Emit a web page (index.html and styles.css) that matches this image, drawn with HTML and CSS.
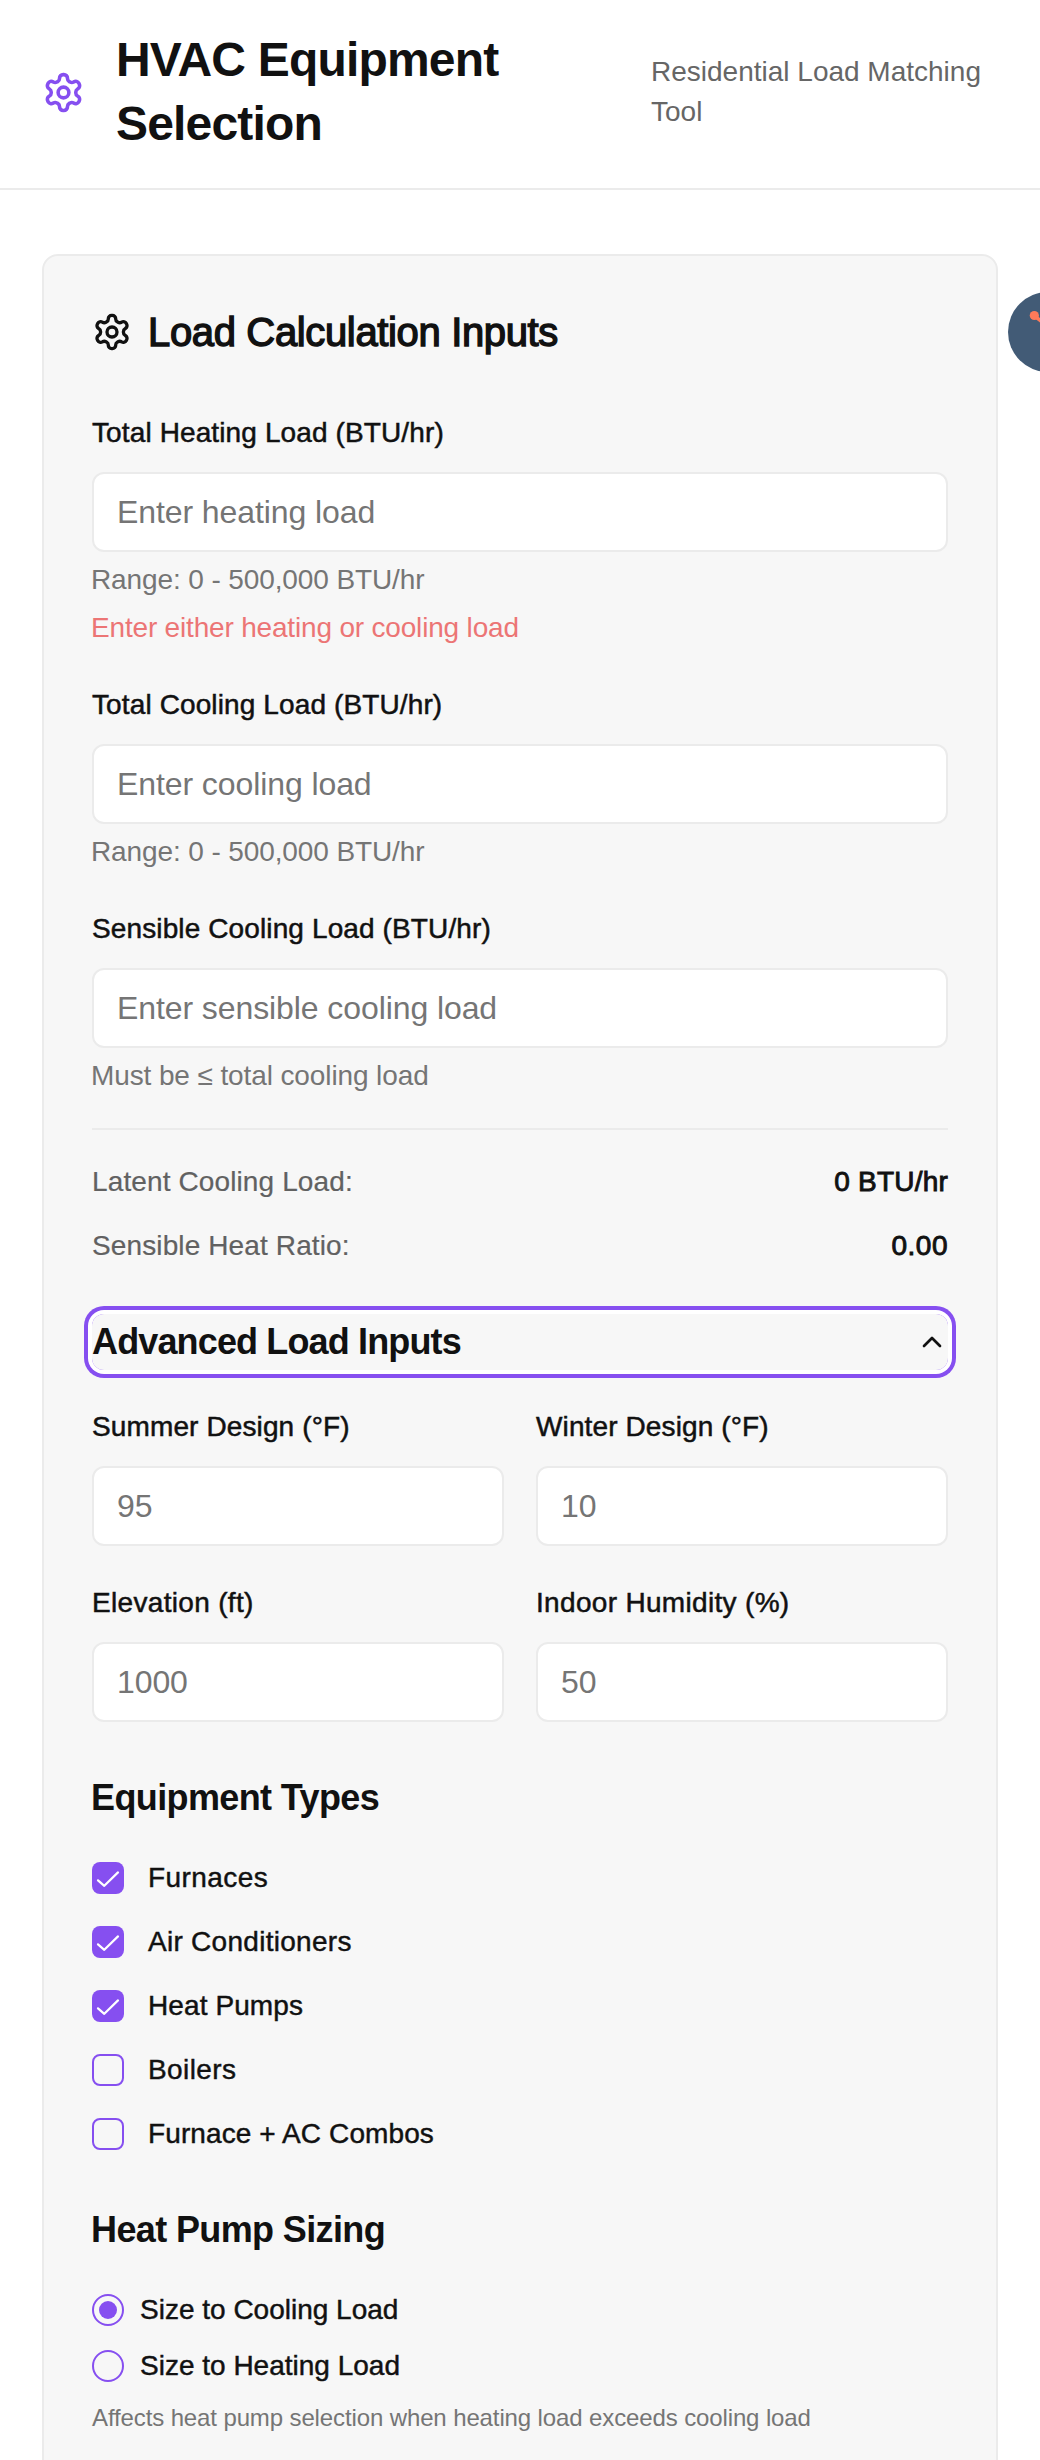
FILE: index.html
```html
<!DOCTYPE html>
<html lang="en">
<head>
<meta charset="utf-8">
<title>HVAC Equipment Selection</title>
<link rel="stylesheet" href="styles.css">
</head>
<body>
<svg class="defs" aria-hidden="true">
  <symbol id="gear" viewBox="0 0 24 24"><path d="M12.22 2h-.44a2 2 0 0 0-2 2v.18a2 2 0 0 1-1 1.73l-.43.25a2 2 0 0 1-2 0l-.15-.08a2 2 0 0 0-2.73.73l-.22.38a2 2 0 0 0 .73 2.73l.15.1a2 2 0 0 1 1 1.72v.51a2 2 0 0 1-1 1.74l-.15.09a2 2 0 0 0-.73 2.73l.22.38a2 2 0 0 0 2.73.73l.15-.08a2 2 0 0 1 2 0l.43.25a2 2 0 0 1 1 1.73V20a2 2 0 0 0 2 2h.44a2 2 0 0 0 2-2v-.18a2 2 0 0 1 1-1.73l.43-.25a2 2 0 0 1 2 0l.15.08a2 2 0 0 0 2.73-.73l.22-.39a2 2 0 0 0-.73-2.73l-.15-.08a2 2 0 0 1-1-1.74v-.5a2 2 0 0 1 1-1.74l.15-.09a2 2 0 0 0 .73-2.73l-.22-.38a2 2 0 0 0-2.73-.73l-.15.08a2 2 0 0 1-2 0l-.43-.25a2 2 0 0 1-1-1.73V4a2 2 0 0 0-2-2z"/><circle cx="12" cy="12" r="3"/></symbol>
  <symbol id="check" viewBox="0 0 32 32"><path d="M6 18.3l6.3 5.5L26 10.4"/></symbol>
</svg>
<header class="header">
  <div class="brand">
    <svg class="icon brand-icon"><use href="#gear"/></svg>
    <h1>HVAC Equipment<br>Selection</h1>
  </div>
  <p class="tagline">Residential Load Matching Tool</p>
</header>
<main class="main">
  <section class="card">
    <h2 class="card-title"><svg class="icon title-icon"><use href="#gear"/></svg>Load Calculation Inputs</h2>

    <div class="fields">
      <div class="field">
        <label class="label" for="heating">Total Heating Load (BTU/hr)</label>
        <input class="input" id="heating" placeholder="Enter heating load">
        <p class="help">Range: 0 - 500,000 BTU/hr</p>
        <p class="help error">Enter either heating or cooling load</p>
      </div>
      <div class="field">
        <label class="label" for="cooling">Total Cooling Load (BTU/hr)</label>
        <input class="input" id="cooling" placeholder="Enter cooling load">
        <p class="help">Range: 0 - 500,000 BTU/hr</p>
      </div>
      <div class="field">
        <label class="label" for="sensible">Sensible Cooling Load (BTU/hr)</label>
        <input class="input" id="sensible" placeholder="Enter sensible cooling load">
        <p class="help">Must be ≤ total cooling load</p>
      </div>
    </div>

    <dl class="results">
      <div class="result"><dt>Latent Cooling Load:</dt><dd>0 BTU/hr</dd></div>
      <div class="result"><dt>Sensible Heat Ratio:</dt><dd class="ratio">0.00</dd></div>
    </dl>

    <button class="disclosure" type="button">Advanced Load Inputs<svg class="icon chevron" viewBox="0 0 24 24"><path d="m18 15-6-6-6 6"/></svg></button>

    <div class="fields grid">
      <div class="field">
        <label class="label" for="summer">Summer Design (°F)</label>
        <input class="input" id="summer" placeholder="95">
      </div>
      <div class="field">
        <label class="label" for="winter">Winter Design (°F)</label>
        <input class="input" id="winter" placeholder="10">
      </div>
      <div class="field">
        <label class="label loose" for="elevation">Elevation (ft)</label>
        <input class="input" id="elevation" placeholder="1000">
      </div>
      <div class="field">
        <label class="label loose" for="humidity">Indoor Humidity (%)</label>
        <input class="input" id="humidity" placeholder="50">
      </div>
    </div>

    <h3 class="section-title">Equipment Types</h3>
    <div class="checks">
      <div class="option"><span class="box checked"><svg><use href="#check"/></svg></span><span class="furnaces">Furnaces</span></div>
      <div class="option"><span class="box checked"><svg><use href="#check"/></svg></span><span class="loose">Air Conditioners</span></div>
      <div class="option"><span class="box checked"><svg><use href="#check"/></svg></span>Heat Pumps</div>
      <div class="option"><span class="box"></span><span class="furnaces">Boilers</span></div>
      <div class="option"><span class="box"></span>Furnace + AC Combos</div>
    </div>

    <h3 class="section-title">Heat Pump Sizing</h3>
    <div class="radios">
      <div class="option"><span class="radio selected"></span>Size to Cooling Load</div>
      <div class="option"><span class="radio"></span>Size to Heating Load</div>
    </div>
    <p class="note">Affects heat pump selection when heating load exceeds cooling load</p>
  </section>
</main>
<div class="floating-badge">
  <svg viewBox="0 0 80 80"><g stroke="#ff7a59" stroke-width="3.6" fill="none"><path d="M26 23.5l18 14M50 24v12"/><circle cx="50" cy="44" r="8"/></g><circle cx="26.3" cy="23.5" r="4.6" fill="#ff7a59"/></svg>
</div>
</body>
</html>
```
FILE: styles.css
```css
* { box-sizing: border-box; margin: 0; padding: 0; }

:root {
  --ink: #111;
  --muted: #757575;
  --line: #ebebeb;
  --accent: #864ff0;
}

body {
  position: relative;
  height: 2460px;
  overflow: hidden;
  background: #fff;
  color: var(--ink);
  font: 400 28px/40px "Liberation Sans", Arial, sans-serif;
}

.defs { display: none; }

.icon {
  flex: none;
  fill: none;
  stroke: currentColor;
  stroke-width: 2;
  stroke-linecap: round;
  stroke-linejoin: round;
}

.header {
  display: flex;
  align-items: center;
  justify-content: space-between;
  padding: 28px 42px 32px;
  border-bottom: 2px solid var(--line);
}

.brand { display: flex; align-items: center; gap: 31px; }
.brand-icon { width: 43px; height: 43px; color: var(--accent); }

h1 {
  font-size: 48px;
  line-height: 64px;
  font-weight: 700;
  letter-spacing: -0.82px;
}

.tagline { width: 347px; color: #666; }

.main { padding: 64px 42px 0; }

.card {
  height: 2300px;
  padding: 48px;
  border: 2px solid var(--line);
  border-radius: 16px;
  background: #f7f7f7;
}

.card-title {
  display: flex;
  align-items: center;
  gap: 16px;
  margin-bottom: 52px;
  font-size: 40px;
  line-height: 56px;
  font-weight: 400;
  letter-spacing: -0.35px;
  -webkit-text-stroke: 1.4px currentColor;
}
.title-icon { width: 40px; height: 40px; -webkit-text-stroke: 0; }

.fields { display: grid; gap: 36px 32px; }
.grid { grid-template-columns: 1fr 1fr; }
.field { display: flex; flex-direction: column; }

.label {
  padding-top: 1px;
  margin-bottom: 19px;
  letter-spacing: 0.12px;
  -webkit-text-stroke: 0.5px currentColor;
}
.loose { letter-spacing: 0.32px; }

.input {
  width: 100%;
  height: 80px;
  padding: 0 23px;
  border: 2px solid var(--line);
  border-radius: 12px;
  background: #fff;
  font: inherit;
  font-size: 32px;
  letter-spacing: -0.09px;
}
.input::placeholder { color: var(--muted); opacity: 1; }

.help {
  margin-top: 8px;
  text-indent: -1px;
  color: var(--muted);
  letter-spacing: -0.11px;
}
.error { color: #ec7575; letter-spacing: -0.18px; }

.results {
  display: flex;
  flex-direction: column;
  gap: 24px;
  margin: 32px 0 48px;
  padding-top: 32px;
  border-top: 2px solid var(--line);
}
.result { display: flex; justify-content: space-between; }
.result dt {
  color: #616161;
  letter-spacing: 0.12px;
  -webkit-text-stroke: 0.2px currentColor;
}
.result dd {
  letter-spacing: 0.2px;
  -webkit-text-stroke: 0.9px currentColor;
}
.result .ratio { letter-spacing: 0.5px; }

.disclosure {
  display: flex;
  align-items: center;
  justify-content: space-between;
  width: 100%;
  height: 56px;
  margin-bottom: 36px;
  border: 0;
  border-radius: 12px;
  background: none;
  box-shadow: 0 0 0 4px #fff, 0 0 0 8px var(--accent);
  color: inherit;
  font: inherit;
  font-size: 36px;
  font-weight: 700;
  letter-spacing: -0.86px;
}
.chevron { width: 32px; height: 32px; }

.section-title {
  margin: 48px 0 32px;
  font-size: 36px;
  line-height: 56px;
  font-weight: 700;
  letter-spacing: -0.62px;
  text-indent: -1px;
}

.option {
  display: flex;
  align-items: center;
  letter-spacing: 0.1px;
  -webkit-text-stroke: 0.45px currentColor;
}

.checks { display: flex; flex-direction: column; gap: 24px; }
.checks .option { gap: 24px; }
.option .loose { letter-spacing: 0.28px; }
.option .furnaces { letter-spacing: 0.42px; }

.box {
  width: 32px;
  height: 32px;
  border: 2px solid var(--accent);
  border-radius: 8px;
}
.checked { border: 0; background: var(--accent); }
.checked svg {
  display: block;
  width: 32px;
  height: 32px;
  fill: none;
  stroke: #fff;
  stroke-width: 2.2;
  stroke-linecap: round;
  stroke-linejoin: round;
}

.radios { display: flex; flex-direction: column; gap: 16px; }
.radios .option { gap: 16px; letter-spacing: 0; }
.radio {
  display: grid;
  place-items: center;
  width: 32px;
  height: 32px;
  border: 2px solid var(--accent);
  border-radius: 50%;
}
.selected::before {
  content: "";
  width: 18px;
  height: 18px;
  border-radius: 50%;
  background: var(--accent);
}

.note {
  margin-top: 16px;
  font-size: 24px;
  line-height: 32px;
  color: var(--muted);
  letter-spacing: -0.12px;
}

/* Widget launcher pinned over the right edge of the page */
.floating-badge {
  position: absolute;
  top: 292px;
  right: -48px;
  width: 80px;
  height: 80px;
  border-radius: 50%;
  background: #425b76;
}
```
